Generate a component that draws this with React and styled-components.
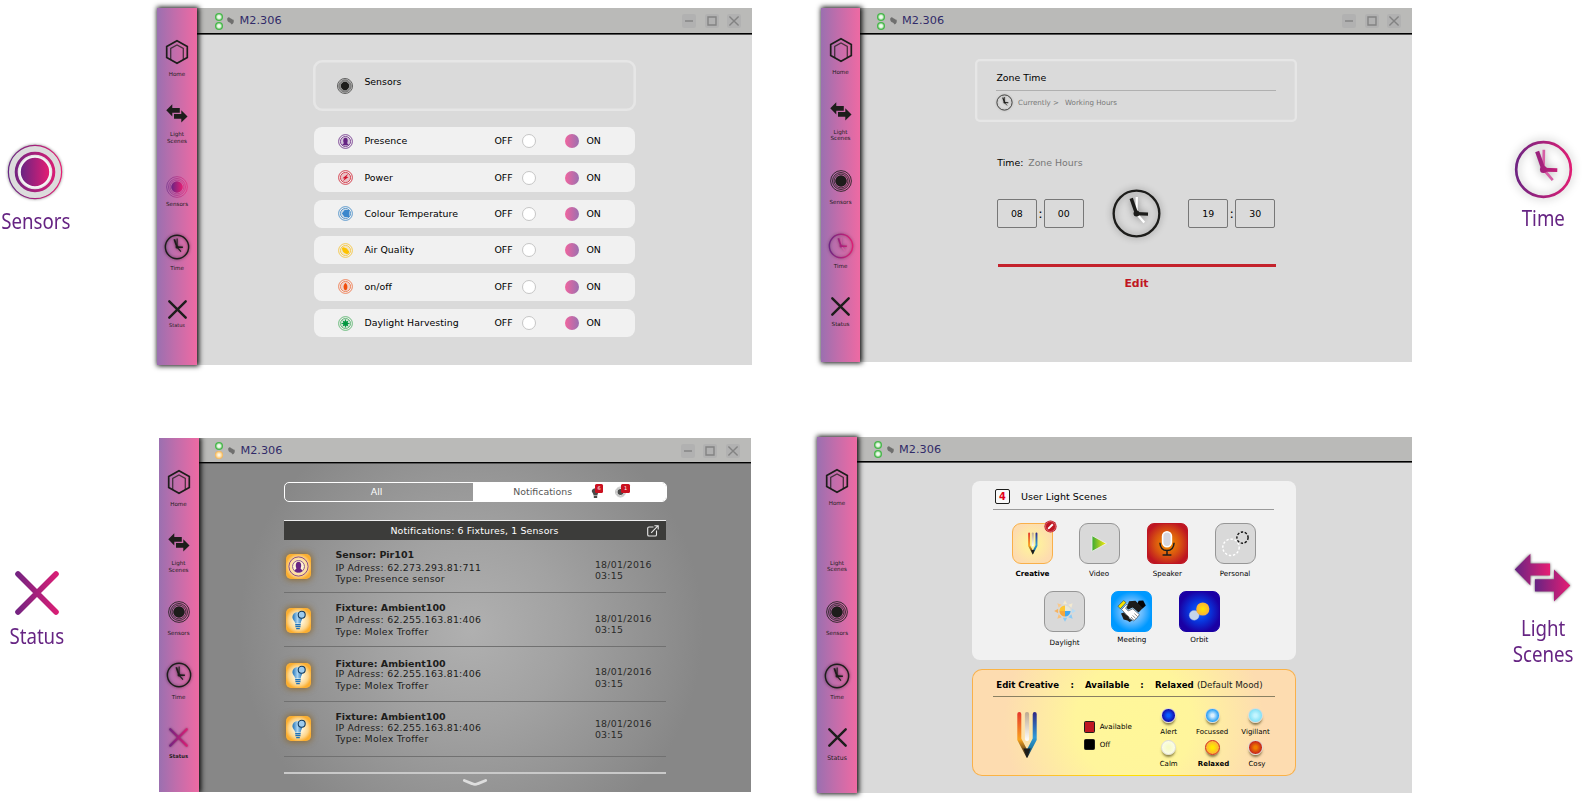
import React from "react";
import styled, { createGlobalStyle, css } from "styled-components";

const INK = "#1d1d1b";
const BRAND = "#662483";

const GlobalStyle = createGlobalStyle`
  *, *::before, *::after { box-sizing: border-box; }
  body { margin: 0; background: #fff; overflow: hidden; font-family: "DejaVu Sans", Verdana, sans-serif; }
  svg { display: block; overflow: visible; flex: none; }
`;

/* ---------- page ---------- */

const Page = styled.main`
  width: 1588px;
  height: 801px;
  display: flex;
  flex-direction: column;
  overflow: hidden;
`;

const Band = styled.section`
  display: flex;
  align-items: flex-start;
  height: ${(p) => p.$height}px;
  padding-top: ${(p) => p.$top}px;
`;

const Legend = styled.aside`
  display: flex;
  flex-direction: column;
  align-items: center;
  flex: none;
  width: ${(p) => p.$width}px;
  margin: ${(p) => p.$margin};
`;

const LegendText = styled.div`
  margin-top: ${(p) => p.$gap}px;
  padding-left: ${(p) => p.$shift || 0}px;
  font-family: "Noto Sans", "Open Sans", sans-serif;
  font-size: 21px;
  line-height: 26px;
  color: ${BRAND};
  text-align: center;
  transform: scaleX(0.89);
`;

/* ---------- window ---------- */

const Frame = styled.div`
  display: flex;
  flex: none;
  width: ${(p) => p.$width}px;
  height: ${(p) => p.$height}px;
  margin: ${(p) => p.$offset}px 0 0 ${(p) => p.$left}px;
  ${(p) => p.$clip && css`overflow: hidden;`}
`;

const Side = styled.nav`
  position: relative;
  z-index: 1;
  flex: none;
  display: flex;
  flex-direction: column;
  align-items: center;
  width: ${(p) => p.$width}px;
  padding-top: ${(p) => p.$top}px;
  background: linear-gradient(90deg, #9b70b0 0%, #c26dab 45%, #ee6aa3 100%);
  box-shadow: 1px 0 5px 1px rgba(0, 0, 0, 0.95);
`;

const NavItem = styled.div`
  display: flex;
  flex-direction: column;
  align-items: center;
  flex: none;
  height: ${(p) => p.$height}px;
`;

const NavGlyph = styled.div`
  display: flex;
  align-items: center;
  justify-content: center;
  flex: none;
  width: 30px;
  height: 28px;
`;

const NavLabel = styled.div`
  margin-top: ${(p) => p.$gap}px;
  font-size: ${(p) => p.$size || 5.6}px;
  line-height: 6.7px;
  font-weight: ${(p) => (p.$bold ? 700 : 400)};
  color: ${INK};
  text-align: center;
  white-space: pre-line;
`;

const Main = styled.div`
  flex: 1;
  min-width: 0;
  display: flex;
  flex-direction: column;
  background: #dadada;
`;

const TitleBar = styled.header`
  display: flex;
  align-items: center;
  flex: none;
  height: ${(p) => p.$height + 2}px;
  padding: 0 11px 0 ${(p) => p.$pad}px;
  background: #babab8;
  border-bottom: 1px solid #555;
  box-shadow: inset 0 -1px 0 #000;
`;

const Lamps = styled.div`
  display: flex;
  flex-direction: column;
  gap: 1px;
`;

const Lamp = styled.i`
  width: 8px;
  height: 8px;
  border-radius: 50%;
  background: ${(p) =>
    p.$amber
      ? "radial-gradient(circle, #fff 0%, #fde3b0 35%, #f5ad45 75%)"
      : "radial-gradient(circle, #fff 0%, #d9f2d5 32%, #45b649 58%)"};
`;

const RoomName = styled.div`
  flex: 1;
  margin-left: 5.6px;
  font-size: 11.3px;
  line-height: 14px;
  color: #312a68;
`;

const Controls = styled.div`
  display: flex;
  gap: 8.3px;
`;

const ControlButton = styled.div`
  width: 14px;
  height: 14px;
  border-radius: 2px;
  background: #b1b1b1;
`;

const Body = styled.div`
  flex: 1;
  display: flex;
  flex-direction: column;
  align-items: flex-start;
  padding: ${(p) => p.$pad};
  ${(p) =>
    p.$dark &&
    css`background: radial-gradient(circle 232px at 272px 165px, #b0b0b0 0%, #a2a2a2 40%, #878787 100%) #878787;`}
`;

const Text = styled.span`
  font-size: ${(p) => p.$size || 9.4}px;
  line-height: 12px;
  font-weight: ${(p) => (p.$bold ? 700 : 400)};
  color: ${(p) => p.$color || "#000"};
  letter-spacing: ${(p) => p.$track || 0}px;
  margin-left: ${(p) => p.$left || 0}px;
  white-space: nowrap;
`;

const Divider = styled.div`
  flex: none;
  width: ${(p) => p.$width || "100%"};
  height: ${(p) => p.$weight || 1}px;
  margin: ${(p) => p.$margin || 0};
  background: ${(p) => p.$color};
`;

/* ---------- sensors ---------- */

const SensorHead = styled.div`
  display: flex;
  align-items: flex-start;
  width: 323px;
  height: 50.5px;
  padding: 16px 0 0 24px;
  box-shadow: inset 0 0 0 2.6px #e6e6e6;
  border-radius: 9px;
`;

const SensorList = styled.div`
  display: flex;
  flex-direction: column;
  gap: 8.1px;
  margin: 16.5px 0 0 1px;
`;

const SensorRow = styled.div`
  display: flex;
  align-items: center;
  width: 321px;
  height: 28.3px;
  padding-left: 24px;
  border-radius: 8px;
  background: #f1f1f1;
`;

const SensorName = styled(Text)`
  flex: none;
  width: 130px;
  margin-left: 11.4px;
  letter-spacing: 0.05px;
`;

const Knob = styled.i`
  flex: none;
  width: 14px;
  height: 14px;
  margin-left: ${(p) => (p.$on ? 29 : 9)}px;
  margin-right: ${(p) => (p.$on ? 7.9 : 0)}px;
  border-radius: 50%;
  border: ${(p) => (p.$on ? 0 : "1px solid #c6c6c6")};
  background: ${(p) => (p.$on ? "linear-gradient(90deg, #f0659f, #9b70b0)" : "#fff")};
`;

/* ---------- time ---------- */

const ZoneCard = styled.div`
  display: flex;
  flex-direction: column;
  width: 322px;
  height: 63.5px;
  padding: 13.1px 21px 0;
  box-shadow: inset 0 0 0 2.3px #e6e6e6;
  border-radius: 5px;
`;

const Inline = styled.div`
  display: flex;
  align-items: center;
  margin: ${(p) => p.$margin || 0};
`;

const TimeRow = styled.div`
  display: flex;
  align-items: center;
  height: 48px;
  width: 278px;
  margin: 21px 0 0 22px;
`;

const TimeBox = styled.div`
  display: flex;
  align-items: center;
  justify-content: center;
  width: 39.7px;
  height: 29px;
  border: 1px solid #777;
  border-radius: 2px;
  font-size: 9.4px;
`;

const Colon = styled.div`
  display: flex;
  justify-content: center;
  width: 7.3px;
  font-size: 13px;
  line-height: 14px;
`;

const ClockSlot = styled.div`
  display: flex;
  flex: 1;
  justify-content: center;
`;

const EditLink = styled.div`
  width: 278px;
  margin: 10px 0 0 22.5px;
  font-size: 10.9px;
  line-height: 14px;
  font-weight: 700;
  text-align: center;
  color: #c01522;
`;

/* ---------- status ---------- */

const Tabs = styled.div`
  display: flex;
  width: 383px;
  height: 20px;
  border: 1px solid #fff;
  border-radius: 5px;
  overflow: hidden;
`;

const Tab = styled.div`
  display: flex;
  align-items: center;
  width: ${(p) => p.$width}px;
  justify-content: ${(p) => (p.$on ? "flex-start" : "center")};
  padding-left: ${(p) => (p.$on ? 40 : 0)}px;
  padding-right: ${(p) => (p.$on ? 0 : 5)}px;
  background: ${(p) => (p.$on ? "#fff" : "transparent")};
`;

const Alert = styled.div`
  position: relative;
  width: 11px;
  height: 12px;
  margin-left: ${(p) => p.$left}px;
`;

const Badge = styled.b`
  position: absolute;
  left: ${(p) => p.$x}px;
  top: -2px;
  width: 8.6px;
  height: 8.6px;
  border-radius: 1.5px;
  background: #ca1120;
  color: #fff;
  font-size: 5px;
  font-weight: 400;
  line-height: 8.6px;
  text-align: center;
`;

const NoticeHead = styled.div`
  display: flex;
  align-items: center;
  justify-content: space-between;
  width: 382px;
  height: 20px;
  margin-top: 18px;
  padding: 0 7px 0 106.5px;
  border-top: 1px solid #eee;
  background: #3c3c3a;
`;

const Notice = styled.article`
  display: flex;
  width: 382px;
  height: ${(p) => p.$height}px;
  padding-left: 2.3px;
  border-bottom: 1px solid #717171;
`;

const NoticeTile = styled.div`
  flex: none;
  display: flex;
  align-items: center;
  justify-content: center;
  width: 25px;
  height: 25px;
  margin-top: ${(p) => p.$top}px;
  border-radius: 5px;
  background: radial-gradient(circle, #fffbe8 15%, #fdd58a 55%, #fbae30 74%);
  box-shadow: 0 0 6px 1px rgba(140, 95, 20, 0.75);
`;

const NoticeLines = styled.div`
  display: flex;
  flex-direction: column;
  width: 259.5px;
  margin: ${(p) => p.$top}px 0 0 24.2px;
`;

const NoticeLine = styled.div`
  height: ${(p) => p.$height}px;
  font-size: ${(p) => (p.$bold ? 9.5 : 9.4)}px;
  line-height: 12px;
  font-weight: ${(p) => (p.$bold ? 700 : 400)};
  letter-spacing: ${(p) => (p.$bold ? 0 : 0.26)}px;
  color: ${INK};
  white-space: nowrap;
`;

const NoticeDate = styled.div`
  margin-top: ${(p) => p.$top}px;
  font-size: 9.4px;
  line-height: 11.4px;
  letter-spacing: 0.28px;
  color: #2a2a28;
  white-space: pre-line;
`;

/* ---------- light scenes ---------- */

const SceneCard = styled.div`
  display: flex;
  flex-direction: column;
  width: 324px;
  height: 179px;
  padding: 8.5px 22px 0 21px;
  border-radius: 8px;
  background: #f1f1f1;
`;

const Count = styled.b`
  display: flex;
  align-items: center;
  justify-content: center;
  width: 15px;
  height: 15px;
  margin: 0 11px 0 2px;
  border: 1px solid ${INK};
  border-radius: 2px;
  background: #fafafa;
  font-size: 9.8px;
  line-height: 12px;
  color: #e2001a;
`;

const SceneRow = styled.div`
  display: flex;
  margin: ${(p) => p.$margin};
`;

const Scene = styled.div`
  display: flex;
  flex-direction: column;
  align-items: center;
  width: 41px;
  margin-left: ${(p) => p.$left || 0}px;
`;

const sceneFill = {
  plain: "#d9d9d9",
  cream: "radial-gradient(circle, #fff59a 10%, #fddcaf 75%)",
  red: "radial-gradient(circle, #f08a00 8%, #d95510 45%, #be1622 80%)",
  sky: "radial-gradient(circle, #b9e0ff 5%, #55b5ff 45%, #0099ff 72%)",
  navy: "radial-gradient(circle, #0a5cff 8%, #0a2fd6 42%, #1a00a4 75%)",
};
const sceneEdge = { plain: "#969696", cream: "#f9b04a", red: "#be1622", sky: "#0099ff", navy: "#1a00a4" };

const SceneTile = styled.div`
  position: relative;
  display: flex;
  align-items: center;
  justify-content: center;
  width: 41px;
  height: 41px;
  border: 1px solid ${(p) => sceneEdge[p.$tone]};
  border-radius: ${(p) => (p.$tone === "plain" || p.$tone === "cream" ? 9 : 7)}px;
  background: ${(p) => sceneFill[p.$tone]};
`;

const SceneLabel = styled.div`
  margin-top: ${(p) => p.$gap}px;
  font-size: 7.2px;
  line-height: 10px;
  font-weight: ${(p) => (p.$bold ? 700 : 400)};
  white-space: nowrap;
`;

const EditMark = styled.div`
  position: absolute;
  right: -5px;
  top: -4px;
`;

const EditCard = styled.div`
  display: flex;
  flex-direction: column;
  width: 324px;
  height: 107.5px;
  margin-top: 9px;
  padding: 9px 20.5px 0 19.5px;
  border: 1.5px solid transparent;
  border-radius: 10px;
  background:
    radial-gradient(circle 130px at 50% 50%, #fff799 0%, #fff59c 45%, #fddcb0 100%) padding-box,
    linear-gradient(90deg, #f9b04a 0%, #fdb73e 15%, #ffe000 50%, #fdb73e 85%, #f9b04a 100%) border-box;
`;

const EditBody = styled.div`
  display: flex;
  align-items: flex-start;
`;

const Options = styled.div`
  display: flex;
  flex: none;
  flex-direction: column;
  gap: 6px;
  margin: 23.7px 0 0 47px;
  width: 60px;
`;

const Option = styled.div`
  display: flex;
  align-items: center;
  gap: 4.5px;
  font-size: 7.1px;
  line-height: 11.7px;
`;

const Swatch = styled.i`
  flex: none;
  width: 11.7px;
  height: 11.7px;
  border: 1px solid ${INK};
  border-radius: 1.5px;
  background: ${(p) => p.$color};
`;

const Moods = styled.div`
  display: grid;
  flex: none;
  grid-template-columns: 43.4px 43.4px 43.4px;
  grid-auto-rows: 32.5px;
  margin: 10.5px 0 0 3.5px;
`;

const Mood = styled.div`
  display: flex;
  flex-direction: column;
  align-items: center;
  font-size: 7px;
  line-height: 10px;
  font-weight: ${(p) => (p.$bold ? 700 : 400)};
  white-space: nowrap;
`;

const MoodLabel = styled.span`
  margin-top: 4px;
  padding-left: ${(p) => p.$shift || 0}px;
`;

const Ball = styled.i`
  width: 15px;
  height: 15px;
  border-radius: 50%;
  border: 1.2px solid ${(p) => p.$ring || "#dcdcdc"};
  background: radial-gradient(circle, ${(p) => p.$from} 15%, ${(p) => p.$to} 72%);
  box-shadow: 0 3px 2.5px -1px rgba(70, 60, 20, 0.65);
`;

/* ---------- drawings ---------- */

const GradientDefs = () => (
  <svg width="0" height="0" style={{ position: "absolute" }}>
    <defs>
      <linearGradient id="brand" gradientUnits="userSpaceOnUse" x1="-26" x2="26" y1="0" y2="0">
        <stop offset="0" stopColor="#662483" />
        <stop offset="1" stopColor="#e71d73" />
      </linearGradient>
      <linearGradient id="brandCore" gradientUnits="userSpaceOnUse" x1="-15" x2="15" y1="0" y2="0">
        <stop offset="0" stopColor="#662483" />
        <stop offset="1" stopColor="#e71d73" />
      </linearGradient>
      <linearGradient id="brandBox" x1="0" x2="1" y1="0" y2="0">
        <stop offset="0" stopColor="#662483" />
        <stop offset="1" stopColor="#e71d73" />
      </linearGradient>
      <linearGradient id="pencilWarm" x1="0" x2="0" y1="0" y2="1">
        <stop offset="0" stopColor="#e5352c" />
        <stop offset="0.6" stopColor="#f9a41f" />
        <stop offset="0.78" stopColor="#8a5f1c" />
        <stop offset="1" stopColor={INK} />
      </linearGradient>
      <linearGradient id="pencilCool" x1="0" x2="0" y1="0" y2="1">
        <stop offset="0" stopColor="#312783" />
        <stop offset="0.55" stopColor="#2f9ad8" />
        <stop offset="0.75" stopColor="#1f7fae" />
        <stop offset="1" stopColor={INK} />
      </linearGradient>
      <linearGradient id="pencilMid" x1="0" x2="0" y1="0" y2="1">
        <stop offset="0" stopColor="#bda98e" />
        <stop offset="1" stopColor="#fff" />
      </linearGradient>
      <linearGradient id="play" x1="0" x2="1" y1="0" y2="0">
        <stop offset="0" stopColor="#3aaa35" />
        <stop offset="1" stopColor="#fcea10" />
      </linearGradient>
      <linearGradient id="bulb" x1="0" x2="1" y1="0" y2="0">
        <stop offset="0" stopColor="#1d71b8" />
        <stop offset="0.5" stopColor="#a7d2f0" />
        <stop offset="1" stopColor="#1d71b8" />
      </linearGradient>
      <radialGradient id="gold">
        <stop offset="0" stopColor="#ffe800" />
        <stop offset="1" stopColor="#fbb03b" />
      </radialGradient>
    </defs>
  </svg>
);

const glow = (px, a) => ({ filter: `drop-shadow(0 0 ${px}px rgba(0,0,0,${a}))` });

const HomeIcon = () => (
  <svg width="22" height="24" viewBox="-11 -12 22 24" fill="none">
    <path d="M0-11.2 10.3-5.6V5.6L0 11.2-10.3 5.6V-5.6Z" stroke={INK} strokeWidth="1.7" />
    <path d="M-6.3 7.6V-3.5L0-7 6.3-3.5V7.6" stroke={INK} strokeOpacity=".75" strokeWidth="1.3" />
  </svg>
);

const ArrowsIcon = ({ width = 22, brand }) => (
  <svg width={width} height={(width * 50) / 58} viewBox="-29 -25 58 50" style={brand ? glow(1.5, 0.6) : undefined}>
    <path d="M-28.3-8.3-12.3-24.3V-14.3H7.7V-2H-12.3V8Z" fill={brand ? "url(#brandBox)" : INK} />
    <path d="M28.3 8 11.7-8.3V1.7H-7.7V14.3H11.7V24.3Z" fill={brand ? "url(#brandBox)" : INK} />
  </svg>
);

const SensorsIcon = ({ size = 22, active }) => {
  const c = active ? "url(#brand)" : INK;
  return (
    <svg width={size} height={size} viewBox="-28 -28 56 56" fill="none">
      <g opacity={active ? 0.7 : 1}>
        <circle r="26.4" stroke={c} strokeWidth="2.2" />
        <circle r="21.5" stroke={c} strokeWidth="2.2" />
        <circle r="17.6" stroke={c} strokeWidth="2" />
      </g>
      <circle r="14.8" fill={active ? "url(#brandCore)" : INK} />
    </svg>
  );
};

const BigSensors = () => (
  <svg width="56" height="56" viewBox="-28 -28 56 56" style={glow(1.8, 0.45)}>
    <circle r="26.6" fill="#dcdcdc" stroke="url(#brand)" strokeWidth="1.2" />
    <circle r="18.8" fill="#e6e6e6" stroke="url(#brand)" strokeWidth="3" />
    <circle r="15" fill="url(#brandCore)" stroke="#f7f7f7" strokeWidth="1.6" />
  </svg>
);

const ClockIcon = ({ size = 26, tone = "ink", shade = 0.45, stroke = 2.3, shadowSize = 2.5 }) => {
  const c = tone === "brand" ? "url(#brand)" : INK;
  const pale = tone === "brand" ? "#d65fa6" : tone === "pale" ? "#fff" : INK;
  return (
    <svg width={size} height={size} viewBox="-25 -25 50 50" fill="none" style={glow(shadowSize, shade)}>
      <circle r="22.4" stroke={c} strokeWidth={stroke} />
      <path d="M.3-16.2 0 0 7.6 8.8" stroke={pale} strokeWidth="2.2" />
      <path d="M-5.2-14.8 0 0" stroke={c} strokeWidth="3.4" />
      <path d="M0 .2 11.3 .5" stroke={c} strokeWidth="3.2" />
      <circle r="2.9" fill={c} />
    </svg>
  );
};

const CrossIcon = ({ size = 19, brand, shadow }) => (
  <svg width={size} height={size} viewBox="-22 -22 44 44" fill="none" style={shadow ? glow(1.2, 0.4) : undefined}>
    <path
      d="M-19-19 19 19M-19 19 19-19"
      stroke={brand ? "url(#brand)" : INK}
      strokeWidth="5.6"
      strokeLinecap="round"
    />
  </svg>
);

const RingIcon = ({ size = 15, color, children }) => (
  <svg width={size} height={size} viewBox="-7.5 -7.5 15 15" fill="none">
    <circle r="6.9" stroke={color} strokeWidth=".8" />
    <circle r="5.1" stroke={color} strokeWidth=".9" strokeOpacity=".85" fill={color} fillOpacity=".22" />
    {children}
  </svg>
);

const kinds = {
  presence: ["#662483", <path key="g" d="M-3.5 3.7C-2.8 2.3-1.6 2.4-1.8 1.2-2.6-.6-2.4-3.8 0-3.8S2.6-.6 1.8 1.2C1.6 2.4 2.8 2.3 3.5 3.7Z" fill="#662483" />],
  power: ["#cf1c2d", <path key="g" d="M2.8-3.8-3 .8-.8 .9-2.8 3.8 3-.6.9-.7Z" fill="#d3122a" />],
  colour: ["#3a85c4", <path key="g" d="M3.8-3.6V3.6H-.9L-3.6 0-.9-3.6Z" fill="#3a87cc" />],
  air: ["#f5c02c", <path key="g" d="M-3.5-2.6C-1.8-4.2-.6-2.6.6-2.2 2.4-1.9 1.8-.2 3.4.5 4.2 2.8 2.2 4 .6 3.2-1 2.6-3.3 1.6-3.5-2.6Z" fill="#fdc300" />],
  onoff: ["#ef6b3a", <path key="g" d="M0-3.8C1.6-2 1.9-1.2 1.9.4S1.2 3.6 0 3.8C-1.2 3.6-1.9 2-1.9.4S-1.6-2 0-3.8Z" fill="#f04e0e" />],
  daylight: ["#4caf62", <g key="g"><circle r="2.5" fill="#009640" /><path d="M0-4V4M-4 0H4M-2.8-2.8 2.8 2.8M-2.8 2.8 2.8-2.8" stroke="#009640" strokeWidth=".9" /></g>],
};

const KindIcon = ({ kind }) => {
  const [color, glyph] = kinds[kind];
  return <RingIcon color={color}>{glyph}</RingIcon>;
};

const PresenceTileIcon = () => (
  <svg width="21" height="21" viewBox="-10.5 -10.5 21 21" fill="none">
    <circle r="9.6" stroke="#7a3f8c" strokeWidth=".9" />
    <circle r="6" stroke="#8d5d93" strokeWidth="1" />
    <path d="M-4 4.5C-3.3 2.6-1.8 3-2.2 1.6-3.2-.4-3-4.8 0-4.8S3.2-.4 2.2 1.6C1.8 3 3.3 2.6 4 4.5 1.6 6.2-1.6 6.2-4 4.5Z" fill={BRAND} />
  </svg>
);

const BulbIcon = () => (
  <svg width="16" height="20" viewBox="0 0 16 20">
    <path d="M1.4 7.2A5.1 5.3 0 0 1 11.6 7.2C11.4 9.6 9.9 10.8 9.7 13.4H4.2C3.9 11 1.5 9.8 1.4 7.2Z" fill="url(#bulb)" />
    <path d="M4.2 14H9.7V15.4H4.2ZM4.4 16H9.5V17.3H4.4ZM5.2 17.9H8.8V19.2H5.2Z" fill="#1d71b8" />
    <circle cx="10.7" cy="4.8" r="3.5" fill="#9ccbee" stroke="#123a5e" strokeWidth="1.1" />
  </svg>
);

const PencilIcon = ({ height = 48 }) => (
  <svg width={(height * 20) / 48} height={height} viewBox="0 0 20 48">
    <path d="M.3 3A2 2 0 0 1 4.3 3V27.5L10 38.5V47L9 45.5.3 29Z" fill="url(#pencilWarm)" />
    <path d="M19.7 3A2 2 0 0 0 15.7 3V27.5L10 38.5V47L11 45.5 19.7 29Z" fill="url(#pencilCool)" />
    <rect x="7.9" y="1" width="4.2" height="29" rx="2" fill="url(#pencilMid)" />
    <path d="M6.4 37.5H13.6L10 47Z" fill={INK} />
  </svg>
);

const PlayIcon = () => (
  <svg width="16" height="17" viewBox="0 0 16 17">
    <path d="M1 .6 15.4 8.5 1 16.4Z" fill="url(#play)" stroke="#f3f3f3" strokeWidth=".8" />
  </svg>
);

const MicIcon = () => (
  <svg width="16" height="25" viewBox="0 0 16 25" fill="none">
    <path d="M.9 11.8C1.2 16.6 4 19.6 8 19.6S14.8 16.6 15.1 11.8M8 19.6V23.6M3.6 24H12.4" stroke={INK} strokeWidth="1.5" />
    <rect x="3.6" y=".7" width="8.8" height="15" rx="4.4" fill="#d6d6de" stroke="#fff" strokeWidth="1.6" />
  </svg>
);

const PersonalIcon = () => (
  <svg width="27" height="25" viewBox="0 0 27 25" fill="none">
    <circle cx="9" cy="16.3" r="8.2" stroke="#fff" strokeWidth="1.4" strokeDasharray="2.4 1.8" />
    <circle cx="20.5" cy="6.6" r="5.6" stroke="#111" strokeWidth="1.4" strokeDasharray="2.4 1.6" />
  </svg>
);

const SunIcon = () => (
  <svg width="22" height="22" viewBox="-11 -11 22 22">
    {["#f3ead0", "#f3ead0", "#b5dcf5", "#8ccbf5", "#8ccbf5", "#f9c27a", "#f7b25f", "#f9c98c"].map((c, i) => (
      <path key={i} d="M-2.2-6.8H2.2L0-10.8Z" fill={c} transform={`rotate(${i * 45})`} />
    ))}
    <path d="M0 0V-5.6A5.6 5.6 0 0 0-5.6 0Z" fill="#fdc733" />
    <path d="M0 0V-5.6A5.6 5.6 0 0 1 5.6 0Z" fill="#e8e8d8" />
    <path d="M0 0V5.6A5.6 5.6 0 0 1-5.6 0Z" fill="#f7a83a" />
    <path d="M0 0V5.6A5.6 5.6 0 0 0 5.6 0Z" fill="#3fa9f5" />
  </svg>
);

const HandshakeIcon = () => (
  <svg width="28" height="23" viewBox="0 0 28 23" strokeLinejoin="round">
    <path d="M0 6.2 5.6 .6 8 2.6 2.3 8.8Z" fill="#f6e500" stroke={INK} strokeWidth=".5" />
    <path d="M20.6 .8 25.2 .6 27.8 5.4 24.6 8.6 19.6 3.4Z" fill="#050505" />
    <path d="M11 1.2 17.4 .8 24.8 8 20.6 12.6 14.6 7.4 10.4 9.6 8.6 8Z" fill={INK} />
    <path d="M3.6 9.4 8 4.8 10.2 4.6 7.6 8.2 10.2 11 14.8 8.8 21.4 14.6 19.8 16.8 18.2 18.8 15.6 20.8 11.4 18Z" fill="#fff" stroke={INK} strokeWidth=".5" />
    <path d="M3 13.4 5.8 12.6 8 14.8 10.4 16.2 11.2 18.4 14.2 20.6 11.6 22 9.4 20.4 5.6 19.4Z" fill={INK} />
    <path d="M16.4 13.6 19.6 16.6M14.6 15.4 17.8 18.6M13 17 15.8 20" stroke={INK} strokeWidth=".5" />
  </svg>
);

const OrbitIcon = () => (
  <svg width="21" height="19" viewBox="0 0 21 19">
    <circle cx="5.2" cy="13.3" r="4.9" fill="#c5d4ea" stroke="#9fb9e8" strokeWidth=".4" />
    <circle cx="13.8" cy="7" r="6.6" fill="url(#gold)" />
  </svg>
);

const EditMarkIcon = () => (
  <svg width="13" height="13" viewBox="-6.5 -6.5 13 13">
    <circle r="6.1" fill="#be1622" />
    <circle r="5" fill="none" stroke="#e58a90" strokeWidth=".6" />
    <path d="M-2.9 2.9-2.3 .9 1.6-3 3-1.6-.9 2.3Z" fill="#fff" />
  </svg>
);

const LeafIcon = () => (
  <svg width="7" height="8" viewBox="0 0 7 8">
    <path d="M.3 1.3C1.4-.2 2.6.1 3 1.3 4.4.9 4.4 2.4 6.6 2.7 7.2 5 6.4 6.8 4.6 7.4 3.6 6.8 3.6 5.9 2.6 5.6 .9 5.4-.2 3.4.3 1.3Z" fill="#6f6f6e" />
  </svg>
);

const ShareIcon = () => (
  <svg width="12" height="12" viewBox="0 0 12 12" fill="none" stroke="#e8e8e8" strokeWidth="1.1">
    <path d="M6.5 2H2Q.7 2 .7 3.3V9.7Q.7 11 2 11H8.2Q9.5 11 9.5 9.7V5.5" />
    <path d="M4.2 7.8 10.6 1.2M7.4 .8H11.2V4.4" />
  </svg>
);

const ControlIcon = ({ d }) => (
  <svg width="14" height="14" viewBox="0 0 14 14" fill="none" stroke="#838383" strokeWidth="1.4">
    <path d={d} />
  </svg>
);

/* ---------- shared window shell ---------- */

const windowButtons = ["M3 7H11", "M3 3H11V11H3Z", "M2.4 2.4 11.6 11.6M11.6 2.4 2.4 11.6"];

const glyphFor = (name, active) => {
  switch (name) {
    case "home":
      return <HomeIcon />;
    case "scenes":
      return active ? null : <ArrowsIcon width={21.8} />;
    case "sensors":
      return <SensorsIcon active={active} />;
    case "time":
      return <ClockIcon tone={active ? "brand" : "ink"} stroke={2.8} shadowSize={1.6} shade={active ? 0.35 : 0.55} />;
    default:
      return <CrossIcon brand={active} shadow={active} />;
  }
};

const navItems = [
  ["home", "Home"],
  ["scenes", "Light\nScenes"],
  ["sensors", "Sensors"],
  ["time", "Time"],
  ["status", "Status"],
];

function Sidebar({ width = 40, active, icons, labels, statusSize }) {
  return (
    <Side $width={width} $top={icons[0] - 14}>
      {navItems.map(([name, label], i) => (
        <NavItem key={name} $height={i < 4 ? icons[i + 1] - icons[i] : 40}>
          <NavGlyph>{glyphFor(name, name === active)}</NavGlyph>
          <NavLabel
            $gap={labels[i] - icons[i] - 17.3}
            $size={name === "status" ? statusSize : undefined}
            $bold={name === "status" && active === "status"}
          >
            {label}
          </NavLabel>
        </NavItem>
      ))}
    </Side>
  );
}

function AppWindow({ frame, nav, bar = 25, pad = 17.5, amber, controls = true, children }) {
  return (
    <Frame {...frame}>
      <Sidebar {...nav} />
      <Main>
        <TitleBar $height={bar} $pad={pad}>
          <Lamps>
            <Lamp />
            <Lamp $amber={amber} />
          </Lamps>
          <Inline $margin="0 0 0 4.5px"><LeafIcon /></Inline>
          <RoomName>M2.306</RoomName>
          {controls && (
            <Controls>
              {windowButtons.map((d) => (
                <ControlButton key={d}><ControlIcon d={d} /></ControlButton>
              ))}
            </Controls>
          )}
        </TitleBar>
        {children}
      </Main>
    </Frame>
  );
}

/* ---------- screens ---------- */

const sensorRows = [
  ["presence", "Presence"],
  ["power", "Power"],
  ["colour", "Colour Temperature"],
  ["air", "Air Quality"],
  ["onoff", "on/off"],
  ["daylight", "Daylight Harvesting"],
];

const SensorsScreen = () => (
  <Body $pad="25px 0 0 116px">
    <SensorHead>
      <Inline $margin="2px 0 0"><SensorsIcon size={16} /></Inline>
      <Text $left={11.4}>Sensors</Text>
    </SensorHead>
    <SensorList>
      {sensorRows.map(([kind, name]) => (
        <SensorRow key={kind}>
          <KindIcon kind={kind} />
          <SensorName>{name}</SensorName>
          <Text>OFF</Text>
          <Knob />
          <Knob $on />
          <Text>ON</Text>
        </SensorRow>
      ))}
    </SensorList>
  </Body>
);

const TimeScreen = () => (
  <Body $pad="23.5px 0 0 115px">
    <ZoneCard>
      <Text $left={0.4}>Zone Time</Text>
      <Divider $color="#b0b0b0" $weight={1.4} $margin="6px 0 0" $width="280px" />
      <Inline $margin="3.5px 0 0">
        <ClockIcon size={17} tone="ink" shade={0.3} shadowSize={0.8} />
        <Text $size={7.1} $left={5} $color="#777">Currently &gt;</Text>
        <Text $size={7.1} $left={6} $color="#777">Working Hours</Text>
      </Inline>
    </ZoneCard>
    <Inline $margin="34.5px 0 0 22.3px">
      <Text>Time:</Text>
      <Text $left={4.8} $color="#777">Zone Hours</Text>
    </Inline>
    <TimeRow>
      <TimeBox>08</TimeBox>
      <Colon>:</Colon>
      <TimeBox>00</TimeBox>
      <ClockSlot><ClockIcon size={51} tone="pale" shade={0.4} shadowSize={3.5} /></ClockSlot>
      <TimeBox>19</TimeBox>
      <Colon>:</Colon>
      <TimeBox>30</TimeBox>
    </TimeRow>
    <Divider $color="#c4222c" $weight={2.6} $width="278.5px" $margin="26.8px 0 0 22.5px" />
    <EditLink>Edit</EditLink>
  </Body>
);

const fixture = ["Fixture: Ambient100", "IP Adress: 62.255.163.81:406", "Type: Molex Troffer"];
const notices = [
  { lines: ["Sensor: Pir101", "IP Adress: 62.273.293.81:711", "Type: Presence sensor"], sensor: true, height: 53, tile: 14, top: 9.2, step: 12.4, date: 19 },
  { lines: fixture, height: 54, tile: 14.5, top: 9.2, step: 12.2, date: 19.5 },
  { lines: fixture, height: 55, tile: 15.5, top: 11, step: 10.3, date: 19.3 },
  { lines: fixture, height: 55, tile: 14.2, top: 9.4, step: 10.3, date: 16 },
];

const StatusScreen = () => (
  <Body $dark $pad="18px 0 0 85.4px">
    <Tabs>
      <Tab $width={189}><Text $color="#fff">All</Text></Tab>
      <Tab $width={193} $on>
        <Text $color="#575756">Notifications</Text>
        <Alert $left={18.5}>
          <svg width="8" height="12" viewBox="0 0 8 12">
            <path d="M.7 5A3.8 3.8 0 0 1 8 5C7.8 6.7 6.6 7 6.4 9.4H2.6C2.4 7 .9 6.7 .7 5ZM2.8 10H6.2V12H2.8Z" fill="#4a4a49" />
          </svg>
          <Badge $x={4.3}>6</Badge>
        </Alert>
        <Alert $left={13.5}>
          <svg width="11" height="12" viewBox="-5.5 -5.5 11 11" fill="none">
            <circle r="5" stroke="#aaa" strokeWidth=".7" />
            <circle r="4" stroke="#999" strokeWidth=".6" />
            <circle r="3" fill="#4a4a49" />
          </svg>
          <Badge $x={6.2}>1</Badge>
        </Alert>
      </Tab>
    </Tabs>
    <NoticeHead>
      <Text $color="#fff" $track={0.16}>Notifications: 6 Fixtures, 1 Sensors</Text>
      <ShareIcon />
    </NoticeHead>
    {notices.map((n, i) => (
      <Notice key={i} $height={n.height}>
        <NoticeTile $top={n.tile}>{n.sensor ? <PresenceTileIcon /> : <BulbIcon />}</NoticeTile>
        <NoticeLines $top={n.top}>
          {n.lines.map((line, j) => (
            <NoticeLine key={j} $bold={j === 0} $height={j === 0 ? n.step : 11.5}>{line}</NoticeLine>
          ))}
        </NoticeLines>
        <NoticeDate $top={n.date}>{"18/01/2016\n03:15"}</NoticeDate>
      </Notice>
    ))}
    <Divider $color="#c9c9c9" $weight={1.5} $width="382px" $margin="15px 0 0" />
    <Inline $margin="5.5px 0 0 179px">
      <svg width="24" height="7" viewBox="0 0 24 7" fill="none">
        <path d="M1.3 1.5 9 4.6Q12 6 15 4.6L22.7 1.5" stroke="#dedede" strokeWidth="2.8" strokeLinecap="round" />
      </svg>
    </Inline>
  </Body>
);

const moods = [
  { name: "Alert", from: "#0a5cff", to: "#1408a8" },
  { name: "Focussed", from: "#d9efff", to: "#1599f5" },
  { name: "Vigillant", from: "#c4f5ff", to: "#7fe0f5" },
  { name: "Calm", from: "#f7fbc8", to: "#fbfde8" },
  { name: "Relaxed", from: "#ffe800", to: "#fbb03b", ring: "#cf2a1c", bold: true, shift: 3 },
  { name: "Cosy", from: "#f07d00", to: "#c4201c", shift: 3 },
];

const LightScenesScreen = () => (
  <Body $pad="17.5px 0 0 115px">
    <SceneCard>
      <Inline>
        <Count>4</Count>
        <Text $size={9.57}>User Light Scenes</Text>
      </Inline>
      <Divider $color="#9a9a9a" $margin="5px 0 0" />
      <SceneRow $margin="13px 0 0 19px">
        <Scene>
          <SceneTile $tone="cream">
            <PencilIcon height={23} />
            <EditMark><EditMarkIcon /></EditMark>
          </SceneTile>
          <SceneLabel $gap={5} $bold>Creative</SceneLabel>
        </Scene>
        <Scene $left={25.6}>
          <SceneTile $tone="plain"><PlayIcon /></SceneTile>
          <SceneLabel $gap={5}>Video</SceneLabel>
        </Scene>
        <Scene $left={27.2}>
          <SceneTile $tone="red"><MicIcon /></SceneTile>
          <SceneLabel $gap={5}>Speaker</SceneLabel>
        </Scene>
        <Scene $left={26.8}>
          <SceneTile $tone="plain"><PersonalIcon /></SceneTile>
          <SceneLabel $gap={5}>Personal</SceneLabel>
        </Scene>
      </SceneRow>
      <SceneRow $margin="11.5px 0 0 51px">
        <Scene>
          <SceneTile $tone="plain"><SunIcon /></SceneTile>
          <SceneLabel $gap={6.5}>Daylight</SceneLabel>
        </Scene>
        <Scene $left={26.3}>
          <SceneTile $tone="sky"><HandshakeIcon /></SceneTile>
          <SceneLabel $gap={3.5}>Meeting</SceneLabel>
        </Scene>
        <Scene $left={26.5}>
          <SceneTile $tone="navy"><OrbitIcon /></SceneTile>
          <SceneLabel $gap={3.5}>Orbit</SceneLabel>
        </Scene>
      </SceneRow>
    </SceneCard>
    <EditCard>
      <Inline $margin="0 0 0 3.8px">
        <Text $size={8.6} $bold>Edit Creative</Text>
        <Text $size={8.6} $bold $left={11.5}>:</Text>
        <Text $size={8.6} $bold $left={11}>Available</Text>
        <Text $size={8.6} $bold $left={11}>:</Text>
        <Text $size={8.6} $bold $left={11.2}>Relaxed</Text>
        <Text $size={8.8} $left={3.2} $color={INK}>(Default Mood)</Text>
      </Inline>
      <Divider $color="#8a8062" $weight={1.3} $margin="5.5px 0 0" />
      <EditBody>
        <Inline $margin="14px 0 0 24px"><PencilIcon /></Inline>
        <Options>
          <Option><Swatch $color="#be1622" />Available</Option>
          <Option><Swatch $color="#000" />Off</Option>
        </Options>
        <Moods>
          {moods.map((m) => (
            <Mood key={m.name} $bold={m.bold}>
              <Ball $from={m.from} $to={m.to} $ring={m.ring} />
              <MoodLabel $shift={m.shift}>{m.name}</MoodLabel>
            </Mood>
          ))}
        </Moods>
      </EditBody>
    </EditCard>
  </Body>
);

export default function App() {
  return (
    <Page>
      <GlobalStyle />
      <GradientDefs />
      <Band $height={430} $top={8}>
        <Legend $width={70} $margin="136px 87px 0 0">
          <BigSensors />
          <LegendText $gap={7.5} $shift={1}>Sensors</LegendText>
        </Legend>
        <AppWindow
          frame={{ $width: 595, $height: 356.5, $left: 0, $offset: 0 }}
          nav={{ active: "sensors", icons: [44, 105.5, 179.3, 239, 301.7], labels: [66.5, 126.5, 196.7, 260, 317], statusSize: 5 }}
        >
          <SensorsScreen />
        </AppWindow>
        <AppWindow
          frame={{ $width: 591, $height: 354, $left: 69, $offset: 0 }}
          nav={{ width: 39, active: "time", icons: [41.7, 103, 173, 238, 299], labels: [64, 124, 194.3, 258, 316] }}
          pad={17}
        >
          <TimeScreen />
        </AppWindow>
        <Legend $width={70} $margin="131px 0 0 96.5px">
          <ClockIcon size={61} tone="brand" shade={0.35} shadowSize={5} stroke={2.2} />
          <LegendText $gap={5}>Time</LegendText>
        </Legend>
      </Band>
      <Band $height={371} $top={7}>
        <Legend $width={70} $margin="134px 86.5px 0 2px">
          <CrossIcon size={44} brand />
          <LegendText $gap={8}>Status</LegendText>
        </Legend>
        <AppWindow
          frame={{ $width: 592, $height: 354, $left: 0, $offset: 1, $clip: true }}
          nav={{ active: "status", icons: [43.7, 104.7, 174.3, 237, 299.7], labels: [66, 125.5, 195.7, 259, 318], statusSize: 5.2 }}
          bar={24}
          pad={16.8}
          amber
        >
          <StatusScreen />
        </AppWindow>
        <AppWindow
          frame={{ $width: 595, $height: 356, $left: 66.5, $offset: 0 }}
          nav={{ active: "scenes", icons: [43.7, 104, 174.7, 238.7, 301], labels: [66, 126, 196, 260, 321.5], statusSize: 6.2 }}
          bar={24}
          pad={17}
          controls={false}
        >
          <LightScenesScreen />
        </AppWindow>
        <Legend $width={70} $margin="116px 0 0 95.5px">
          <ArrowsIcon width={57} brand />
          <LegendText $gap={13} $shift={1}>Light<br />Scenes</LegendText>
        </Legend>
      </Band>
    </Page>
  );
}
